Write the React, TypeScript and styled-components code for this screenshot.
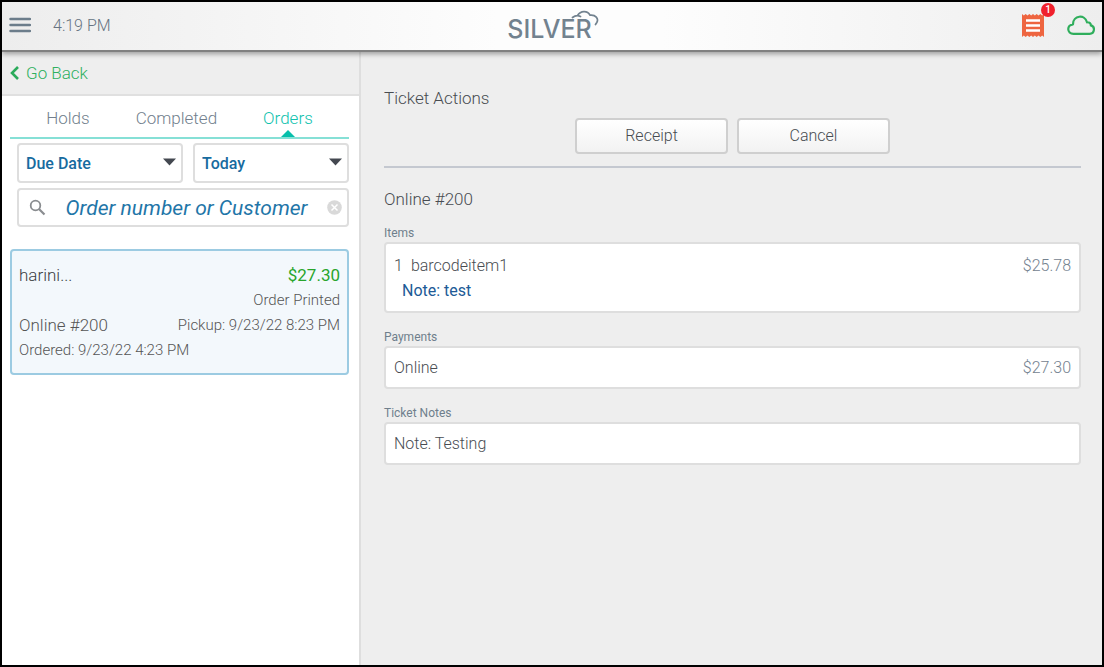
import React, { useState } from "react";
import styled, { createGlobalStyle } from "styled-components";

const GlobalStyle = createGlobalStyle`
  *, *::before, *::after { box-sizing: border-box; }
  body { margin: 0; background: #eee; font-family: Roboto, "Liberation Sans", sans-serif; }
  h1, h2, p { margin: 0; font-weight: 300; }
  button, input, select { font-family: inherit; margin: 0; }
  button { cursor: pointer; }
`;

const Screen = styled.div`
  display: flex;
  flex-direction: column;
  min-height: 100vh;
  border: 2px solid #000;
  background: #eee;
  color: #484c51;
  font-size: 16px;
  line-height: 20px;
  font-weight: 300;
`;

const TopBar = styled.header`
  position: relative;
  z-index: 1;
  display: grid;
  grid-template-columns: 1fr auto 1fr;
  align-items: center;
  height: 50px;
  padding: 0 7px 0 6px;
  background: linear-gradient(90deg, #ededed 0%, #fdfdfd 45%, #fdfdfd 60%, #eee 100%);
  border-bottom: 2px solid #808080;
  box-shadow: 0 2px 5px rgba(0, 0, 0, 0.35);
`;

const BarGroup = styled.div<{ $end?: boolean }>`
  display: flex;
  align-items: center;
  justify-content: ${(p) => (p.$end ? "flex-end" : "flex-start")};
  gap: ${(p) => (p.$end ? 23 : 22)}px;
`;

const IconButton = styled.button`
  position: relative;
  display: flex;
  padding: 0;
  border: 0;
  background: none;
`;

const Clock = styled.time`
  color: #677482;
`;

const Badge = styled.span`
  position: absolute;
  top: -11px;
  right: -11px;
  width: 14px;
  height: 14px;
  border-radius: 50%;
  background: #f0202c;
  color: #fff;
  font-size: 10px;
  line-height: 14px;
  font-weight: 500;
  text-align: center;
`;

const Logo = styled.div`
  position: relative;
  margin-right: 4px;
  padding-top: 5px;
  color: #72828f;
  font-family: Inter, sans-serif;
  font-size: 25px;
  line-height: 28px;
  font-weight: 500;
  svg { position: absolute; top: 0; right: -7px; }
`;

const Body = styled.div`
  flex: 1;
  display: grid;
  grid-template-columns: 359px minmax(0, 1fr);
`;

const Sidebar = styled.aside`
  background: #fff;
  border-right: 2px solid #dedede;
`;

const BackBar = styled.div`
  display: flex;
  align-items: center;
  height: 44px;
  padding: 0 7px;
  background: #eee;
  border-bottom: 2px solid #e0e0e0;
`;

const BackButton = styled.button`
  display: flex;
  align-items: center;
  gap: 6px;
  padding: 0;
  border: 0;
  background: none;
  color: #2fb060;
  font-size: 17px;
  line-height: 22px;
  font-weight: 300;
`;

const Tabs = styled.div`
  display: flex;
  justify-content: center;
  gap: 46px;
  height: 43px;
  margin: 0 10px 0 8px;
  border-bottom: 2px solid #86e0d6;
`;

const Tab = styled.button<{ $active: boolean }>`
  position: relative;
  padding: 3px 0 0;
  border: 0;
  background: none;
  color: ${(p) => (p.$active ? "#0fc2ae" : "#727f8d")};
  font-size: 17px;
  line-height: 22px;
  font-weight: 300;
  &::after {
    content: "";
    display: ${(p) => (p.$active ? "block" : "none")};
    position: absolute;
    bottom: 0;
    left: 50%;
    margin-left: -7px;
    border: 7px solid transparent;
    border-top: 0;
    border-bottom-color: #06bfab;
  }
`;

const Filters = styled.form`
  display: grid;
  grid-template-columns: 166fr 156fr;
  gap: 5px 10px;
  padding: 4px 10px 0 15px;
`;

const SelectBox = styled.label`
  position: relative;
  display: block;
  svg { position: absolute; top: 15px; right: 7px; pointer-events: none; }
`;

const Select = styled.select`
  display: block;
  width: 100%;
  height: 40px;
  padding: 0 7px;
  appearance: none;
  border: 2px solid #dedede;
  border-radius: 4px;
  background: #fff;
  color: #176b9f;
  font-size: 16px;
  font-weight: 500;
`;

const SearchBox = styled.div`
  grid-column: 1 / -1;
  display: flex;
  align-items: center;
  height: 39px;
  padding: 0 5px 0 10px;
  border: 2px solid #dedede;
  border-radius: 4px;
  background: #fff;
`;

const SearchInput = styled.input`
  flex: 1;
  min-width: 0;
  padding: 0;
  border: 0;
  outline: 0;
  background: none;
  color: #1f76a8;
  font-size: 21px;
  font-style: italic;
  text-align: center;
  &::placeholder { color: #1f76a8; opacity: 1; }
`;

const OrderCard = styled.article`
  margin: 22px 10px 0 8px;
  padding: 12px 7px 10px;
  border: 2px solid #9ccbe2;
  border-radius: 4px;
  background: #f3f8fc;
`;

const Row = styled.div<{ $end?: boolean }>`
  display: flex;
  align-items: center;
  justify-content: ${(p) => (p.$end ? "flex-end" : "space-between")};
`;

const CardText = styled.p<{ $size?: number; $color?: string; $weight?: number }>`
  color: ${(p) => p.$color ?? "#555"};
  font-size: ${(p) => p.$size ?? 15}px;
  line-height: 25px;
  font-weight: ${(p) => p.$weight ?? 300};
`;

const Detail = styled.main`
  padding: 35px 21px 24px 23px;
`;

const Heading = styled.h1`
  font-size: 17px;
  line-height: 22px;
`;

const Actions = styled.div`
  display: flex;
  justify-content: center;
  gap: 9px;
  padding: 9px 0 12px;
  margin-bottom: 20px;
  border-bottom: 2px solid #c4c8d0;
`;

const ActionButton = styled.button`
  width: 153px;
  height: 36px;
  border: 2px solid #cfcfcf;
  border-radius: 4px;
  background: linear-gradient(#fff, #f2f2f2);
  color: #484c51;
  font-size: 16px;
  line-height: 20px;
  font-weight: 300;
`;

const Section = styled.section`
  margin-top: 15px;
  &:first-of-type { margin-top: 14px; }
`;

const SectionLabel = styled.h2`
  color: #6f7f8c;
  font-size: 12px;
  line-height: 18px;
  font-weight: 400;
`;

const Panel = styled.div`
  padding: 9px 8px 8px;
  border: 2px solid #dedede;
  border-radius: 4px;
  background: #fff;
  font-size: 16px;
  line-height: 22px;
`;

const ItemPanel = styled(Panel)`
  line-height: 25px;
`;

const Quantity = styled.span`
  margin-right: 8px;
`;

const ItemNote = styled.p`
  padding: 0 8px;
  color: #205a96;
  font-weight: 400;
`;

const Price = styled.span`
  color: #74828f;
`;

const Arrow = () => (
  <svg width="13" height="8" viewBox="0 0 13 8" aria-hidden="true">
    <path d="M0 .5h13L6.500 7.500z" fill="#444850" />
  </svg>
);

const TABS = ["Holds", "Completed", "Orders"];

export default function App() {
  const [tab, setTab] = useState("Orders");
  const [query, setQuery] = useState("");

  return (
    <Screen>
      <GlobalStyle />
      <TopBar>
        <BarGroup>
          <IconButton aria-label="Menu">
            <svg width="23" height="18" viewBox="0 0 23 18">
              <path d="M2.500 2h19.500M2.500 8h19.500M2.500 14h19.500" stroke="#6c7d8b" strokeWidth="2.500" strokeLinecap="round" />
            </svg>
          </IconButton>
          <Clock>4:19 PM</Clock>
        </BarGroup>
        <Logo>
          SILVER
          <svg width="28" height="18" viewBox="0 0 28 18" fill="none" stroke="#72828f" strokeLinecap="round" aria-hidden="true">
            <path d="M1.500 7.500C4 5.500 7 5.200 9.500 6.500M6.500 5.500C9.500 .5 16.500 .2 19 5.200C24.500 4.500 28 8.500 25.800 12.500L24.500 14.500" strokeWidth="1.700" />
          </svg>
        </Logo>
        <BarGroup $end>
          <IconButton aria-label="Orders, 1 new">
            <svg width="22" height="24" viewBox="0 0 22 24">
              <path d="M0 0l1.830 1.500L3.670 0L5.500 1.500L7.330 0L9.170 1.500L11 0l1.830 1.500L14.670 0l1.830 1.500L18.330 0l1.840 1.500L22 0v23l-1.830-1.500L18.330 23l-1.830-1.500L14.670 23l-1.840-1.500L11 23l-1.830-1.500L7.330 23L5.500 21.500L3.670 23l-1.840-1.500L0 23z" fill="#ee6540" />
              <path d="M4 6.500h14M4 11.500h14M4 16.500h14" stroke="#fff" strokeWidth="2.400" />
            </svg>
            <Badge>1</Badge>
          </IconButton>
          <IconButton aria-label="Connected">
            <svg width="28" height="22" viewBox="0 0 28 22" fill="none">
              <path d="M6.500 18.800C-.3 18.800-.5 10 6 9.300C6 .2 18-1 20 7.300C22.500 7 24 8.600 23.800 10.300C28.300 11.200 28 18.800 22.500 18.800z" stroke="#2fae5c" strokeWidth="2.200" strokeLinejoin="round" />
            </svg>
          </IconButton>
        </BarGroup>
      </TopBar>
      <Body>
        <Sidebar>
          <BackBar>
            <BackButton>
              <svg width="11" height="16" viewBox="0 0 11 16" aria-hidden="true">
                <path d="M9 2L3 8l6 6" fill="none" stroke="#2bab5b" strokeWidth="2.600" />
              </svg>
              Go Back
            </BackButton>
          </BackBar>
          <Tabs role="tablist">
            {TABS.map((name) => (
              <Tab key={name} role="tab" aria-selected={tab === name} $active={tab === name} onClick={() => setTab(name)}>
                {name}
              </Tab>
            ))}
          </Tabs>
          <Filters onSubmit={(e) => e.preventDefault()}>
            <SelectBox>
              <Select aria-label="Sort by" defaultValue="Due Date">
                <option>Due Date</option>
              </Select>
              <Arrow />
            </SelectBox>
            <SelectBox>
              <Select aria-label="Period" defaultValue="Today">
                <option>Today</option>
              </Select>
              <Arrow />
            </SelectBox>
            <SearchBox>
              <svg width="17" height="17" viewBox="0 0 17 17" fill="none" stroke="#8a8d90" aria-hidden="true">
                <circle cx="6.500" cy="6.500" r="4.800" strokeWidth="1.800" />
                <path d="M10 10l5.500 5.500" strokeWidth="2.200" />
              </svg>
              <SearchInput
                aria-label="Order number or Customer"
                placeholder="Order number or Customer"
                value={query}
                onChange={(e) => setQuery(e.target.value)}
              />
              <IconButton type="button" aria-label="Clear" onClick={() => setQuery("")}>
                <svg width="15" height="15" viewBox="0 0 15 15">
                  <circle cx="7.500" cy="7.500" r="7.300" fill="#d9d9d9" />
                  <path d="M4.500 4.500l6 6M10.500 4.500l-6 6" stroke="#fff" strokeWidth="1.500" />
                </svg>
              </IconButton>
            </SearchBox>
          </Filters>
          <OrderCard>
            <Row>
              <CardText $size={17} $color="#3c4044">harini...</CardText>
              <CardText $size={17} $color="#28a52c" $weight={400}>$27.30</CardText>
            </Row>
            <Row $end>
              <CardText>Order Printed</CardText>
            </Row>
            <Row>
              <CardText $size={17}>Online #200</CardText>
              <CardText>Pickup: 9/23/22 8:23 PM</CardText>
            </Row>
            <CardText>Ordered: 9/23/22 4:23 PM</CardText>
          </OrderCard>
        </Sidebar>
        <Detail>
          <Heading>Ticket Actions</Heading>
          <Actions>
            <ActionButton>Receipt</ActionButton>
            <ActionButton>Cancel</ActionButton>
          </Actions>
          <Heading as="h2">Online #200</Heading>
          <Section>
            <SectionLabel>Items</SectionLabel>
            <ItemPanel>
              <Row>
                <span>
                  <Quantity>1</Quantity>
                  barcodeitem1
                </span>
                <Price>$25.78</Price>
              </Row>
              <ItemNote>Note: test</ItemNote>
            </ItemPanel>
          </Section>
          <Section>
            <SectionLabel>Payments</SectionLabel>
            <Panel>
              <Row>
                <span>Online</span>
                <Price>$27.30</Price>
              </Row>
            </Panel>
          </Section>
          <Section>
            <SectionLabel>Ticket Notes</SectionLabel>
            <Panel>Note: Testing</Panel>
          </Section>
        </Detail>
      </Body>
    </Screen>
  );
}
